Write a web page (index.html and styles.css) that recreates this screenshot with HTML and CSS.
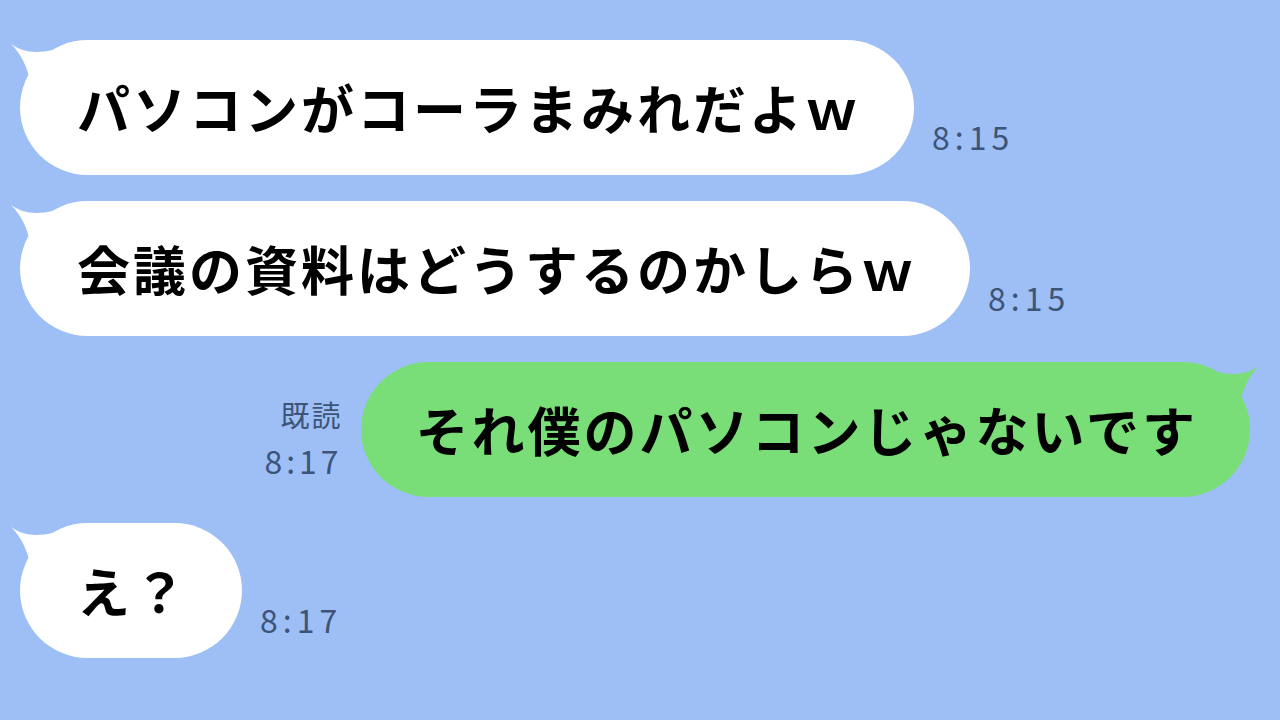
FILE: index.html
```html
<!DOCTYPE html>
<html>
<head>
<meta charset="utf-8">
<title>トーク</title>
<link rel="stylesheet" href="styles.css">
</head>
<body>
<div id="talk">
    <div class="row">
        <div class="bubble left">
            <svg class="tail" width="70" height="50" viewBox="0 0 70 50"><path d="M0 6 C14 16 34 18 62 4 L62 40 L20 46 C16 28 10 16 0 6 Z" fill="#fff"/></svg>
            <span class="text">パソコンがコーラまみれだよｗ</span>
        </div>
        <div class="time">8:15</div>
    </div>
    <div class="row">
        <div class="bubble left">
            <svg class="tail" width="70" height="50" viewBox="0 0 70 50"><path d="M0 6 C14 16 34 18 62 4 L62 40 L20 46 C16 28 10 16 0 6 Z" fill="#fff"/></svg>
            <span class="text">会議の資料はどうするのかしらｗ</span>
        </div>
        <div class="time">8:15</div>
    </div>
    <div class="row mine">
        <div class="read">
            <div class="label">既読</div>
            <div>8:17</div>
        </div>
        <div class="bubble right">
            <svg class="tail" width="70" height="50" viewBox="0 0 70 50"><path d="M70 6 C56 16 36 18 8 4 L8 40 L50 46 C54 28 60 16 70 6 Z" fill="#7ade78"/></svg>
            <span class="text">それ僕のパソコンじゃないです</span>
        </div>
    </div>
    <div class="row">
        <div class="bubble left">
            <svg class="tail" width="70" height="50" viewBox="0 0 70 50"><path d="M0 6 C14 16 34 18 62 4 L62 40 L20 46 C16 28 10 16 0 6 Z" fill="#fff"/></svg>
            <span class="text">え？</span>
        </div>
        <div class="time">8:17</div>
    </div>
</div>
</body>
</html>
```
FILE: styles.css
```css
html, body {
    margin: 0;
    width: 100%;
    height: 100%;
    background-color: #9dbff6;
    overflow: hidden;
}
#talk {
    display: flex;
    flex-direction: column;
    gap: 26px;
    padding: 40px 30px 0 20px;
    font-family: "Noto Sans CJK JP", "Noto Sans", sans-serif;
}
.row {
    display: flex;
    align-items: flex-end;
    gap: 18px;
}
.row.mine {
    justify-content: flex-end;
    gap: 22px;
}
.bubble {
    position: relative;
    height: 135px;
    display: flex;
    align-items: center;
    padding: 0 53px 0 57px;
    border-radius: 68px;
    background-color: #fff;
    box-sizing: border-box;
}
.bubble.right {
    background-color: #7ade78;
    padding: 0 52px 0 55px;
}
.bubble .text {
    font-size: 53px;
    font-weight: bold;
    letter-spacing: 3px;
    color: #000;
    line-height: 1;
}
.bubble .tail {
    position: absolute;
    top: -2px;
}
.bubble.left .tail {
    left: -9px;
}
.bubble.right .tail {
    right: -9px;
}
.time {
    font-size: 32px;
    letter-spacing: 5px;
    color: #3d5478;
    margin-bottom: 16px;
}
.read {
    display: flex;
    flex-direction: column;
    align-items: flex-end;
    font-size: 32px;
    letter-spacing: 4px;
    line-height: 46px;
    color: #3d5478;
    margin-bottom: 14px;
    margin-right: -4px;
}
.read .label {
    font-size: 29px;
    letter-spacing: 2px;
}
```
